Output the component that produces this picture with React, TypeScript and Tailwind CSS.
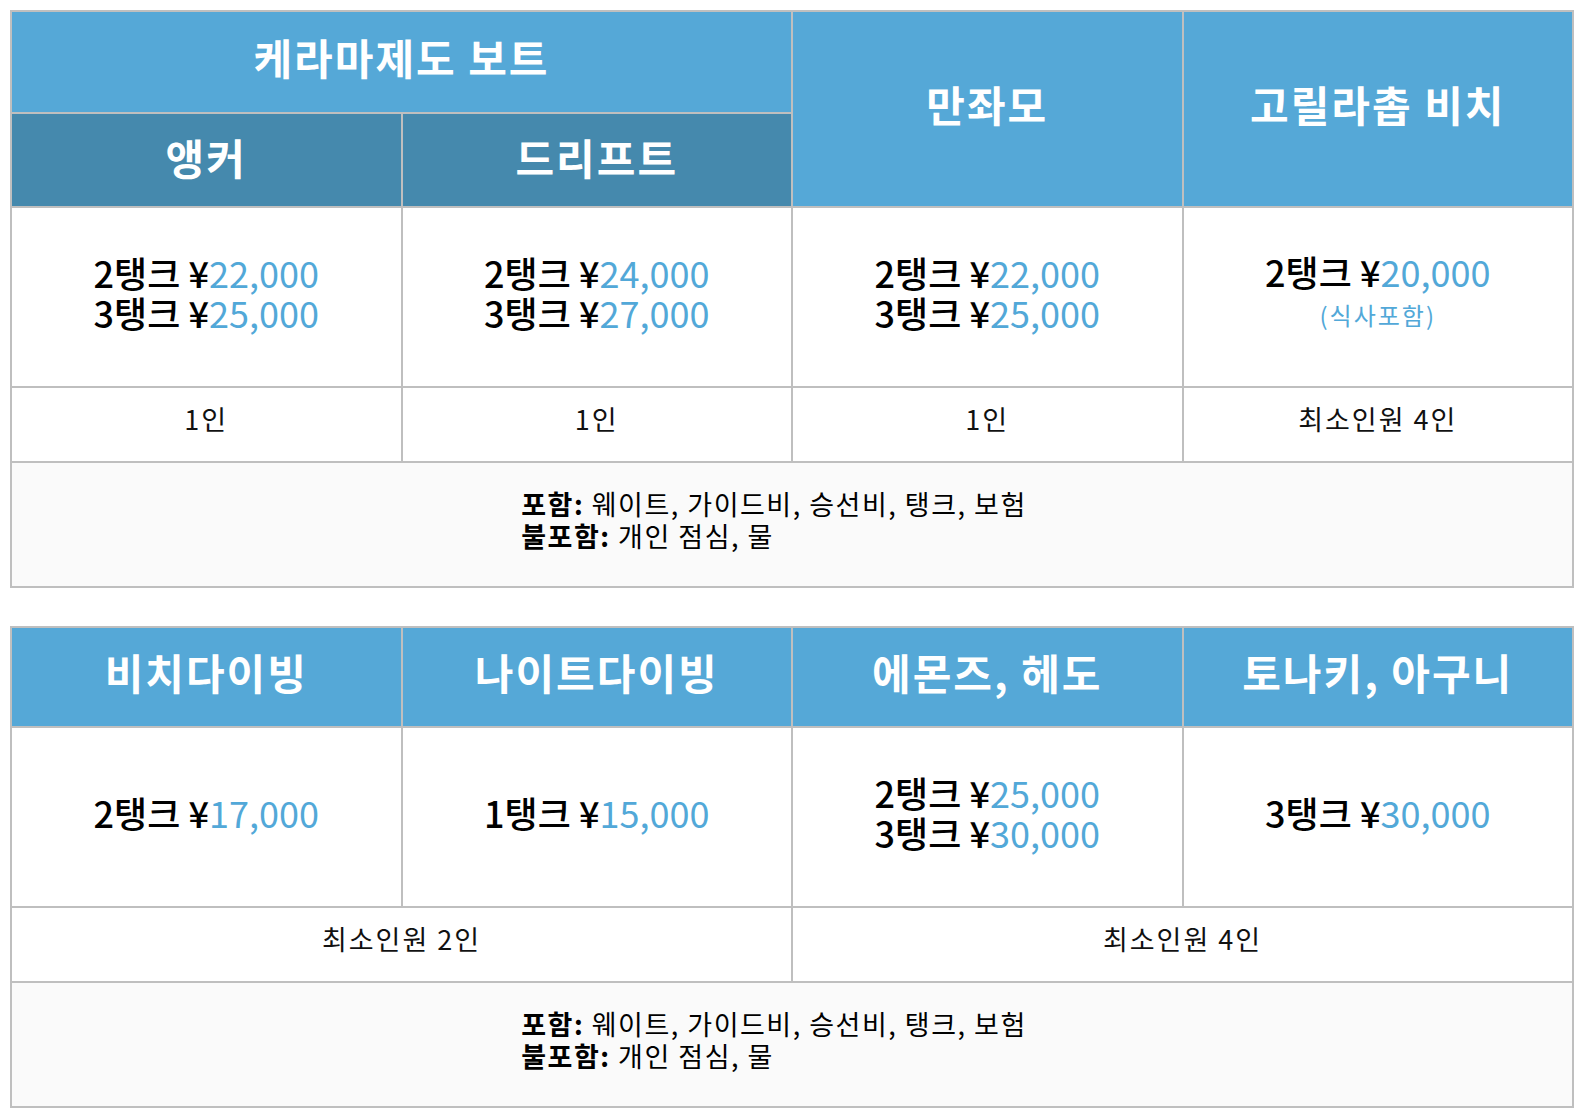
import React from "react";

const font = { fontFamily: '"Noto Sans CJK KR", "Noto Sans", sans-serif' };

const Price = ({ lines }: { lines: [string, string][] }) => (
  <div className="text-[36px] leading-[40px] font-medium text-black">
    {lines.map(([label, amount]) => (
      <div key={label + amount}>
        {label} ¥<span className="font-normal text-[#52a8d8]">{amount}</span>
      </div>
    ))}
  </div>
);

const Notes = () => (
  <td colSpan={4} className="h-[125px] border-2 border-[#bfbfbf] bg-[#fafafa] pb-[10px] text-center">
    <div className="mr-[36px] inline-block text-left text-[27px] leading-[32px] tracking-[1.5px] text-black">
      <div>
        <b>포함:</b> 웨이트, 가이드비, 승선비, 탱크, 보험
      </div>
      <div>
        <b>불포함:</b> 개인 점심, 물
      </div>
    </div>
  </td>
);

const head = "border-2 border-[#bfbfbf] bg-[#55a8d7] pb-[11px] text-[42px] font-bold tracking-[2px] text-white";
const dark = "h-[94px] border-2 border-[#bfbfbf] bg-[#4589ad] pb-[8px] text-[42px] font-bold tracking-[2px] text-white";
const cell = "border-2 border-[#bfbfbf] bg-white pb-[10px] text-center";
const small = "h-[75px] border-2 border-[#bfbfbf] bg-white pb-[10px] text-center text-[27px] tracking-[2px] text-[#111]";

export default function App() {
  return (
    <div className="min-h-screen bg-white pt-[10px] pl-[10px]" style={font}>
      <table className="w-[1564px] table-fixed border-collapse">
        <tbody>
          <tr>
            <th colSpan={2} className={`${head} h-[102px]`}>
              케라마제도 보트
            </th>
            <th rowSpan={2} className={head}>
              만좌모
            </th>
            <th rowSpan={2} className={head}>
              고릴라촙 비치
            </th>
          </tr>
          <tr>
            <th className={dark}>앵커</th>
            <th className={dark}>드리프트</th>
          </tr>
          <tr>
            <td className={`${cell} h-[180px]`}>
              <Price lines={[["2탱크", "22,000"], ["3탱크", "25,000"]]} />
            </td>
            <td className={cell}>
              <Price lines={[["2탱크", "24,000"], ["3탱크", "27,000"]]} />
            </td>
            <td className={cell}>
              <Price lines={[["2탱크", "22,000"], ["3탱크", "25,000"]]} />
            </td>
            <td className="border-2 border-[#bfbfbf] bg-white pb-[4px] text-center">
              <Price lines={[["2탱크", "20,000"]]} />
              <div className="text-[24px] leading-[48px] tracking-[2px] text-[#52a8d8]">(식사포함)</div>
            </td>
          </tr>
          <tr>
            <td className={small}>1인</td>
            <td className={small}>1인</td>
            <td className={small}>1인</td>
            <td className={small}>최소인원 4인</td>
          </tr>
          <tr>
            <Notes />
          </tr>
        </tbody>
      </table>

      <table className="mt-[38px] w-[1564px] table-fixed border-collapse">
        <tbody>
          <tr>
            <th className={`${head} h-[100px]`}>비치다이빙</th>
            <th className={head}>나이트다이빙</th>
            <th className={head}>에몬즈, 헤도</th>
            <th className={head}>토나키, 아구니</th>
          </tr>
          <tr>
            <td className={`${cell} h-[180px]`}>
              <Price lines={[["2탱크", "17,000"]]} />
            </td>
            <td className={cell}>
              <Price lines={[["1탱크", "15,000"]]} />
            </td>
            <td className={cell}>
              <Price lines={[["2탱크", "25,000"], ["3탱크", "30,000"]]} />
            </td>
            <td className={cell}>
              <Price lines={[["3탱크", "30,000"]]} />
            </td>
          </tr>
          <tr>
            <td colSpan={2} className={small}>
              최소인원 2인
            </td>
            <td colSpan={2} className={small}>
              최소인원 4인
            </td>
          </tr>
          <tr>
            <Notes />
          </tr>
        </tbody>
      </table>
    </div>
  );
}
